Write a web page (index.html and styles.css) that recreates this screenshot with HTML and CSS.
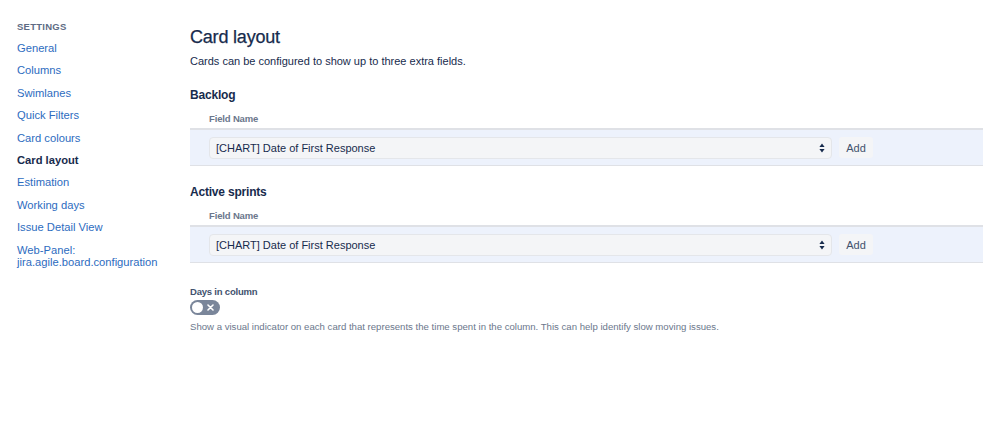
FILE: index.html
```html
<!DOCTYPE html>
<html>
<head>
<meta charset="utf-8">
<link rel="stylesheet" href="styles.css">
</head>
<body>
<div class="page">
  <nav class="sidebar">
    <div class="nav-title">SETTINGS</div>
    <a class="nav-link">General</a>
    <a class="nav-link">Columns</a>
    <a class="nav-link">Swimlanes</a>
    <a class="nav-link">Quick Filters</a>
    <a class="nav-link">Card colours</a>
    <a class="nav-link active">Card layout</a>
    <a class="nav-link">Estimation</a>
    <a class="nav-link">Working days</a>
    <a class="nav-link">Issue Detail View</a>
    <a class="nav-link">Web-Panel:<br>jira.agile.board.configuration</a>
  </nav>
  <main class="main">
    <h1 class="title">Card layout</h1>
    <p class="intro">Cards can be configured to show up to three extra fields.</p>

    <h2 class="section">Backlog</h2>
    <div class="col-head">Field Name</div>
    <div class="row">
      <div class="select"><span>[CHART] Date of First Response</span>
        <svg class="arrows" width="6" height="10" viewBox="0 0 6 10"><path d="M3 0.5L5.6 4H0.4Z M3 9.5L0.4 6H5.6Z" fill="#172b4d"/></svg>
      </div>
      <button class="add">Add</button>
    </div>

    <h2 class="section">Active sprints</h2>
    <div class="col-head">Field Name</div>
    <div class="row">
      <div class="select"><span>[CHART] Date of First Response</span>
        <svg class="arrows" width="6" height="10" viewBox="0 0 6 10"><path d="M3 0.5L5.6 4H0.4Z M3 9.5L0.4 6H5.6Z" fill="#172b4d"/></svg>
      </div>
      <button class="add">Add</button>
    </div>

    <div class="days-label">Days in column</div>
    <div class="toggle">
      <span class="knob"></span>
      <svg class="x" width="7" height="7" viewBox="0 0 7 7"><path d="M1 1L6 6M6 1L1 6" stroke="#fff" stroke-width="1.6" stroke-linecap="round"/></svg>
    </div>
    <p class="hint">Show a visual indicator on each card that represents the time spent in the column. This can help identify slow moving issues.</p>
  </main>
</div>
</body>
</html>
```
FILE: styles.css
```css
* { box-sizing: border-box; }
html, body { margin: 0; background: #fff; }
body {
  font-family: "Liberation Sans", Arial, sans-serif;
  color: #172b4d;
  width: 999px;
  height: 422px;
  overflow: hidden;
}
.page {
  display: flex;
}
.sidebar {
  width: 190px;
  padding: 21px 0 0 17px;
  display: flex;
  flex-direction: column;
}
.nav-title {
  font-size: 9.5px;
  font-weight: bold;
  color: #5e6c84;
  letter-spacing: 0.25px;
  line-height: 12px;
  margin-bottom: 9px;
}
.nav-link {
  font-size: 11.2px;
  line-height: 12px;
  color: #2d6cc0;
  margin-bottom: 10.4px;
  white-space: nowrap;
}
.nav-link.active {
  color: #172b4d;
  font-weight: bold;
}
.main {
  flex: 1;
  padding: 26px 16px 0 0;
}
.title {
  margin: 0;
  font-size: 18px;
  font-weight: normal;
  line-height: 22px;
  color: #172b4d;
  letter-spacing: -0.2px;
  -webkit-text-stroke: 0.25px #172b4d;
}
.intro {
  margin: 6px 0 0;
  font-size: 11px;
  line-height: 14px;
  color: #172b4d;
}
.section {
  margin: 19px 0 0;
  font-size: 12px;
  line-height: 16px;
  font-weight: bold;
  letter-spacing: -0.2px;
  color: #172b4d;
}
.row + .section {
  margin-top: 18px;
}
.col-head {
  margin: 10px 0 0 19px;
  font-size: 9.5px;
  font-weight: bold;
  letter-spacing: -0.15px;
  color: #6b778c;
  line-height: 12px;
}
.row {
  margin-top: 3px;
  display: flex;
  align-items: center;
  gap: 7px;
  height: 38px;
  padding: 0 0 0 19px;
  background: #edf2fc;
  border-top: 2px solid #dfe1e6;
  border-bottom: 1px solid #dfe1e6;
}
.select {
  width: 623px;
  height: 22px;
  background: #f4f5f7;
  border: 1px solid #e4e6ea;
  border-radius: 4px;
  display: flex;
  align-items: center;
  justify-content: space-between;
  padding: 0 6px 0 6px;
  font-size: 11px;
  color: #172b4d;
}
.arrows { display: block; }
.add {
  font-family: inherit;
  height: 21px;
  width: 34px;
  border: none;
  border-radius: 3px;
  background: #f4f5f7;
  font-size: 11px;
  color: #42526e;
  padding: 0;
}
.days-label {
  margin-top: 23px;
  font-size: 9.5px;
  font-weight: bold;
  letter-spacing: -0.2px;
  color: #42526e;
  line-height: 12px;
}
.toggle {
  margin-top: 2px;
  width: 30px;
  height: 15px;
  border-radius: 8px;
  background: #7a869a;
  display: flex;
  align-items: center;
  justify-content: space-between;
  padding: 0 6px 0 2px;
}
.knob {
  width: 11px;
  height: 11px;
  border-radius: 50%;
  background: #fff;
}
.x { display: block; }
.hint {
  margin: 6px 0 0;
  font-size: 9.6px;
  color: #6b778c;
  line-height: 12px;
}
```
